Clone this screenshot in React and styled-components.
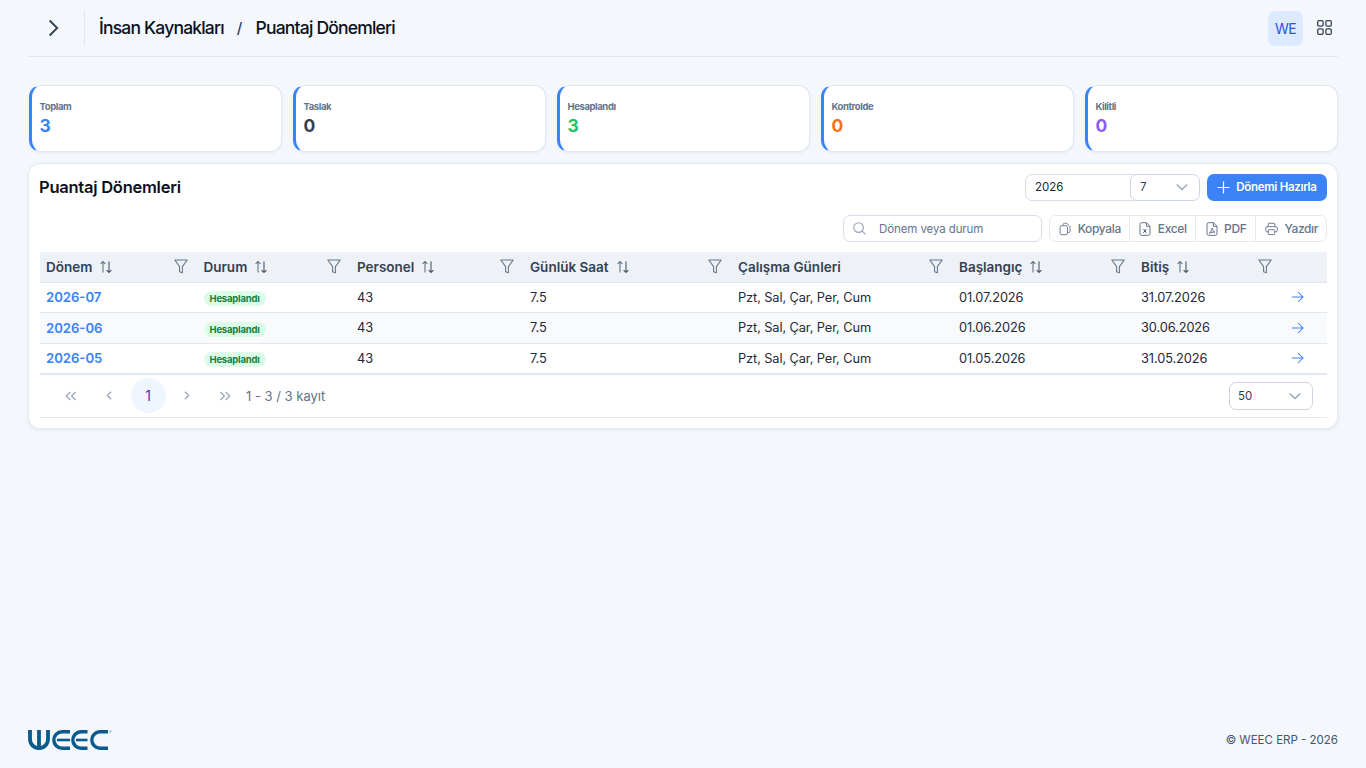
import React from 'react';
import styled, { createGlobalStyle } from 'styled-components';

const Global = createGlobalStyle`
  html, body { margin: 0; padding: 0; height: 100%; background: #f4f7fc; }
  body { font-family: Inter, "Noto Sans", sans-serif; color: #111827; text-rendering: optimizeLegibility; font-feature-settings: "kern", "calt"; }
  #root { height: 768px; }
  * { box-sizing: border-box; }
`;

const Page = styled.div`
  height: 768px; padding: 0 28px; display: flex; flex-direction: column; overflow: hidden;
`;
const TopBar = styled.header`
  height: 57px; flex: none; display: flex; align-items: center; border-bottom: 1px solid #e2e8f0;
  padding: 0 2px 1px 0;
`;
const Toggle = styled.div`
  width: 57px; height: 36px; display: flex; align-items: center; justify-content: center;
  border-right: 1px solid #e2e8f0; color: #334155;
  padding-right: 7px;
`;
const Crumbs = styled.nav`
  display: flex; align-items: center; margin-left: 14px; font-size: 17.5px; font-weight: 500;
  color: #0b1020; letter-spacing: -0.8px; flex: 1;
`;
const Slash = styled.span`
  margin: 0 14px 0 13px; font-size: 15px; color: #334155;
`;
const Avatar = styled.div`
  width: 35px; height: 35px; margin-top: 1px; border-radius: 7px; background: #dbeafe; color: #2c55d8; font-size: 14px; letter-spacing: -0.6px;
  display: flex; align-items: center; justify-content: center;
`;
const Apps = styled.div`
  width: 38px; height: 35px; display: flex; align-items: center; justify-content: center; color: #374151;
  margin-right: -7px; margin-left: 2px;
`;
const Stats = styled.section`
  display: grid; grid-template-columns: repeat(5, 1fr); gap: 11px; margin: 28px 0 11px; padding-left: 1px;
`;
const Stat = styled.div`
  height: 67px; background: #fff; border: 1px solid #e2e8f0; border-left: 3px solid #3b82f6; border-radius: 12px;
  padding: 15px 8px 0 7.5px; box-shadow: 0 1px 3px rgba(15,23,42,.06);
`;
const StatLabel = styled.div`
  font-size: 9.5px; font-weight: 700; color: #64748b; line-height: 12px; letter-spacing: -0.4px;
`;
const StatValue = styled.div`
  font-size: 17.5px; font-weight: 700; line-height: 22px; margin-top: 2px; color: ${p => p.$c};
`;
const Panel = styled.section`
  height: 266px; background: #fff; border: 1px solid #e4eaf3; border-radius: 12px; padding: 10px 10px 0 11px;
  box-shadow: 0 1px 4px rgba(15,23,42,.07);
`;
const PanelHead = styled.div`
  display: flex; align-items: center; justify-content: space-between; height: 27px;
`;
const PanelTitle = styled.h2`
  margin: 0 0 2px -1px; font-size: 16.5px; font-weight: 600; color: #0b1020; letter-spacing: -0.25px;
`;
const Controls = styled.div`
  display: flex; align-items: center;
`;
const YearBox = styled.div`
  width: 115px; height: 27px; border: 1px solid #d5dde9; border-radius: 7px; font-size: 11.5px;
  padding: 0 9px 1px; display: flex; align-items: center; color: #1f2937;
`;
const SelectBox = styled.div`
  width: ${p => p.$w}px; height: ${p => p.$h}px; border: 1px solid #cbd5e1; border-radius: 7px; font-size: 11.5px;
  display: flex; align-items: center; justify-content: space-between; padding: 0 10px 0 8px; color: #334155; background: #fff;
`;
const MonthSelect = styled(SelectBox)`
  margin-left: -10px; padding: 0 10px 1px 9px;
`;
const PrimaryBtn = styled.button`
  margin-left: 7px; height: 27px; width: 120px; border: 0; border-radius: 7px; background: #3b82f6; color: #fff;
  font: 600 11.5px Inter, sans-serif; letter-spacing: -0.3px; display: flex; align-items: center; justify-content: center; gap: 6px; padding: 0 0 1px;
`;
const Tools = styled.div`
  display: flex; justify-content: flex-end; gap: 7px; margin-top: 14px; height: 27px;
`;
const Search = styled.div`
  width: 199px; height: 27px; border: 1px solid #d5dde9; border-radius: 7px; display: flex; align-items: center;
  padding-left: 9px; gap: 13px; font-size: 11.5px; color: #64748b; letter-spacing: -0.1px;
`;
const BtnGroup = styled.div`
  display: flex; height: 27px; border: 1px solid #e2e8f0; border-radius: 7px; overflow: hidden;
`;
const ToolBtn = styled.div`
  width: ${p => p.$w}px; display: flex; align-items: center; justify-content: center; gap: 6.5px; padding-left: 1px; font-size: 12px;
  font-weight: 500; color: #64748b; letter-spacing: -0.35px; border-left: ${p => p.$first ? 0 : '1px solid #e2e8f0'};
`;
const Table = styled.table`
  width: 1287px; margin-top: 10px; border-collapse: collapse; table-layout: fixed;
`;
const HeadRow = styled.tr`
  height: 30px; background: #eef2f7; border-bottom: 1px solid #dfe6f0;
`;
const Th = styled.th`
  padding: 0 10px 0 6px; text-align: left; font-size: 13.5px; font-weight: 600; color: #334155;
`;
const ThInner = styled.div`
  display: flex; align-items: center; justify-content: space-between;
`;
const ThLabel = styled.span`
  display: flex; align-items: center; gap: 7px;
`;
const Row = styled.tr`
  height: ${p => p.$h}px; background: ${p => p.$alt ? '#f8fafc' : '#fff'}; border-bottom: 1px solid #e2e8f0;
`;
const Td = styled.td`
  padding: 0 6px; font-size: 12.8px; letter-spacing: -0.1px; color: #1f2937; white-space: nowrap;
`;
const PeriodLink = styled.a`
  color: #3b82f6; font-weight: 600; font-size: 13.2px; letter-spacing: -0.05px;
`;
const Badge = styled.span`
  display: inline-flex; align-items: center; height: 15px; padding: 0 6px; background: #dcfce7; color: #15803d;
  border-radius: 8px; font-size: 9.5px; font-weight: 700; letter-spacing: -0.2px; vertical-align: middle; position: relative; top: 1px;
`;
const ArrowCell = styled(Td)`
  text-align: center; color: #3b82f6; padding: 0 14px 0 0;
`;
const Pager = styled.div`
  width: 1287px; height: 44px; border-top: 1px solid #dfe6f0; border-bottom: 1px solid #e2e8f0;
  display: flex; align-items: center; gap: 3.5px; padding: 0 14px 0 13.5px; color: #94a3b8;
`;
const PageBtn = styled.div`
  width: 35px; height: 35px; border-radius: 50%; display: flex; align-items: center; justify-content: center;
  background: ${p => p.$on ? '#eff6ff' : 'transparent'}; color: ${p => p.$on ? '#4338ca' : '#94a3b8'}; font-size: 14px;
`;
const PageInfo = styled.span`
  font-size: 13px; color: #64748b; flex: 1;
`;
const Footer = styled.footer`
  margin-top: auto; height: 48px; display: flex; align-items: center; justify-content: space-between; padding-bottom: 9px;
`;
const LogoMark = styled.svg`
  margin-top: 1px;
`;
const Copyright = styled.span`
  font-size: 11.5px; color: #475569;
`;

const Sort = () => (
  <svg width="14" height="14" viewBox="0 0 14 14" fill="none" stroke="#64748b" strokeWidth="1.1">
    <path d="M4 12.5V1.5M1.6 3.9 4 1.5l2.4 2.4" />
    <path d="M10 1.5v11M7.6 10.1 10 12.5l2.4-2.4" stroke="#475569" />
  </svg>
);
const Funnel = () => (
  <svg width="14" height="15" viewBox="0 0 14 15" fill="none" stroke="#64748b" strokeWidth="1.05" strokeLinejoin="round">
    <path d="M.8 1h12.4L8.4 7.6v6.2l-2.8-1.1V7.6z" />
  </svg>
);
const Chev = ({ d, size = 12, w = 1.1, color = 'currentColor' }) => (
  <svg width={size} height={size} viewBox="0 0 12 12" fill="none" stroke={color} strokeWidth={w}><path d={d} /></svg>
);
const Arrow = () => (
  <svg width="13" height="12" viewBox="0 0 13 12" fill="none" stroke="currentColor" strokeWidth="1.05" style={{ display: 'block', margin: '0 auto' }}>
    <path d="M.8 6h11.2M7 1l5 5-5 5" />
  </svg>
);
const Down = () => <Chev size={14} color="#94a3b8" d="M1.5 3.8 6 8.2l4.5-4.4" />;

const CopyIco = () => (
  <svg width="12" height="14" viewBox="0 0 13 14" fill="none" stroke="#64748b" strokeWidth="1"><path d="M4.5 3.2V2.2A1.4 1.4 0 0 1 5.9 .8h2.4l3.6 3.6v5a1.4 1.4 0 0 1-1.4 1.4H9.2" /><rect x="1.2" y="3.4" width="8" height="9.8" rx="2" /></svg>
);
const FileIco = ({ x }) => (
  <svg width="12" height="14" viewBox="0 0 12 14" fill="none" stroke="#64748b" strokeWidth="1">
    <path d="M7.4.7H2.6A1.6 1.6 0 0 0 1 2.3v9.4a1.6 1.6 0 0 0 1.6 1.6h6.8a1.6 1.6 0 0 0 1.6-1.6V4.3zM7.4.7v3.6H11" />
    {x ? <path d="M4.4 7l3 3.8M7.4 7l-3 3.8" stroke="#475569" /> : <path d="M3.2 11.2c1.5-.9 2.8-3.2 2.8-5.2.4 2.2 1.5 3.6 3 4.1-2 0-4.1.2-5.8 1.1z" />}
  </svg>
);
const PrintIco = () => (
  <svg width="13" height="14" viewBox="0 0 14 14" fill="none" stroke="#64748b" strokeWidth="1"><path d="M3.5 4.5V1.6a.8.8 0 0 1 .8-.8h5.4a.8.8 0 0 1 .8.8v2.9M3.5 10H2a1.2 1.2 0 0 1-1.2-1.2V5.7A1.2 1.2 0 0 1 2 4.5h10a1.2 1.2 0 0 1 1.2 1.2v3.1A1.2 1.2 0 0 1 12 10h-1.5" /><rect x="3.5" y="7.8" width="7" height="5.2" rx=".8" /></svg>
);

const Logo = () => (
  <LogoMark width="84" height="20" viewBox="0 0 84 20" fill="none" stroke="#0a5a8c">
    <path d="M2 0V9.200a9 9 0 0 0 18 0V0M11 0V17" strokeWidth="3.8" />
    <path d="M42 1.800H34a8.200 8.200 0 0 0 0 16.400h8" strokeWidth="3.4" />
    <path d="M29 10h13" strokeWidth="2.600" />
    <path d="M59.500 1.800H53a8.200 8.200 0 0 0 0 16.400h6.500" strokeWidth="3.400" />
    <path d="M48 10h11.500" strokeWidth="2.600" />
    <path d="M80 1.800h-8a8.200 8.200 0 0 0 0 16.400h8" strokeWidth="3.400" />
    <circle cx="82.500" cy="1.400" r="1" fill="#7aa6c2" stroke="none" />
  </LogoMark>
);

const stats = [
  ['Toplam', '3', '#3b82f6'], ['Taslak', '0', '#374151'], ['Hesaplandı', '3', '#22c55e'],
  ['Kontrolde', '0', '#f97316'], ['Kilitli', '0', '#8b5cf6'],
];
const cols = [
  ['Dönem', 1, 157.5], ['Durum', 1, 153.5], ['Personel', 1, 173], ['Günlük Saat', 1, 208],
  ['Çalışma Günleri', 0, 221], ['Başlangıç', 1, 182], ['Bitiş', 1, 147], [null, 0, 45],
];
const rows = [
  ['2026-07', '01.07.2026', '31.07.2026', 30],
  ['2026-06', '01.06.2026', '30.06.2026', 31],
  ['2026-05', '01.05.2026', '31.05.2026', 30],
];

export default function App() {
  return (
    <Page>
      <Global />
      <TopBar>
        <Toggle><Chev size={20} w={1.15} d="M4 1.5 8.5 6 4 10.5" /></Toggle>
        <Crumbs>İnsan Kaynakları<Slash>/</Slash>Puantaj Dönemleri</Crumbs>
        <Avatar>WE</Avatar>
        <Apps>
          <svg width="15" height="15" viewBox="0 0 15 15" fill="none" stroke="currentColor" strokeWidth="1.3">
            <rect x=".7" y=".7" width="5.4" height="5.4" rx="1.4" /><rect x="8.9" y=".7" width="5.4" height="5.4" rx="1.4" />
            <rect x=".7" y="8.9" width="5.4" height="5.4" rx="1.4" /><rect x="8.9" y="8.9" width="5.4" height="5.4" rx="1.4" />
          </svg>
        </Apps>
      </TopBar>
      <Stats>
        {stats.map(([l, v, c]) => (
          <Stat key={l}><StatLabel>{l}</StatLabel><StatValue $c={c}>{v}</StatValue></Stat>
        ))}
      </Stats>
      <Panel>
        <PanelHead>
          <PanelTitle>Puantaj Dönemleri</PanelTitle>
          <Controls>
            <YearBox>2026</YearBox>
            <MonthSelect $w={70} $h={27}>7<Down /></MonthSelect>
            <PrimaryBtn>
              <svg width="13" height="13" viewBox="0 0 13 13" stroke="#fff" strokeWidth="1.2"><path d="M6.5 .5v12M.5 6.5h12" /></svg>
              Dönemi Hazırla
            </PrimaryBtn>
          </Controls>
        </PanelHead>
        <Tools>
          <Search>
            <svg width="13" height="13" viewBox="0 0 13 13" fill="none" stroke="#94a3b8" strokeWidth="1.1"><circle cx="5.6" cy="5.6" r="4.8" /><path d="M9.2 9.2 12.4 12.4" /></svg>
            Dönem veya durum
          </Search>
          <BtnGroup>
            <ToolBtn $first $w={79}><CopyIco />Kopyala</ToolBtn>
            <ToolBtn $w={66}><FileIco x />Excel</ToolBtn>
            <ToolBtn $w={60}><FileIco />PDF</ToolBtn>
            <ToolBtn $w={71}><PrintIco />Yazdır</ToolBtn>
          </BtnGroup>
        </Tools>
        <Table>
          <colgroup>{cols.map((c, i) => <col key={i} style={{ width: c[2] }} />)}</colgroup>
          <thead>
            <HeadRow>
              {cols.map(([n, s], i) => (
                <Th key={i}>
                  {n ? (
                    <ThInner><ThLabel>{n}{s ? <Sort /> : null}</ThLabel><Funnel /></ThInner>
                  ) : null}
                </Th>
              ))}
            </HeadRow>
          </thead>
          <tbody>
            {rows.map(([p, a, b, h], i) => (
              <Row key={p} $alt={i === 1} $h={h}>
                <Td><PeriodLink>{p}</PeriodLink></Td>
                <Td><Badge>Hesaplandı</Badge></Td>
                <Td>43</Td>
                <Td>7.5</Td>
                <Td>Pzt, Sal, Çar, Per, Cum</Td>
                <Td>{a}</Td>
                <Td>{b}</Td>
                <ArrowCell><Arrow /></ArrowCell>
              </Row>
            ))}
          </tbody>
        </Table>
        <Pager>
          <PageBtn><Chev size={14} d="M5.5 2.5 2 6l3.5 3.5M10 2.5 6.5 6l3.5 3.5" /></PageBtn>
          <PageBtn><Chev size={13} d="M7.5 2.5 4 6l3.5 3.5" /></PageBtn>
          <PageBtn $on>1</PageBtn>
          <PageBtn><Chev size={13} d="M4.5 2.5 8 6 4.5 9.5" /></PageBtn>
          <PageBtn><Chev size={14} d="M2 2.5 5.5 6 2 9.5M6.5 2.5 10 6l-3.5 3.5" /></PageBtn>
          <PageInfo>1 - 3 / 3 kayıt</PageInfo>
          <SelectBox $w={84} $h={28}>50<Down /></SelectBox>
        </Pager>
      </Panel>
      <Footer>
        <Logo />
        <Copyright>© WEEC ERP - 2026</Copyright>
      </Footer>
    </Page>
  );
}
